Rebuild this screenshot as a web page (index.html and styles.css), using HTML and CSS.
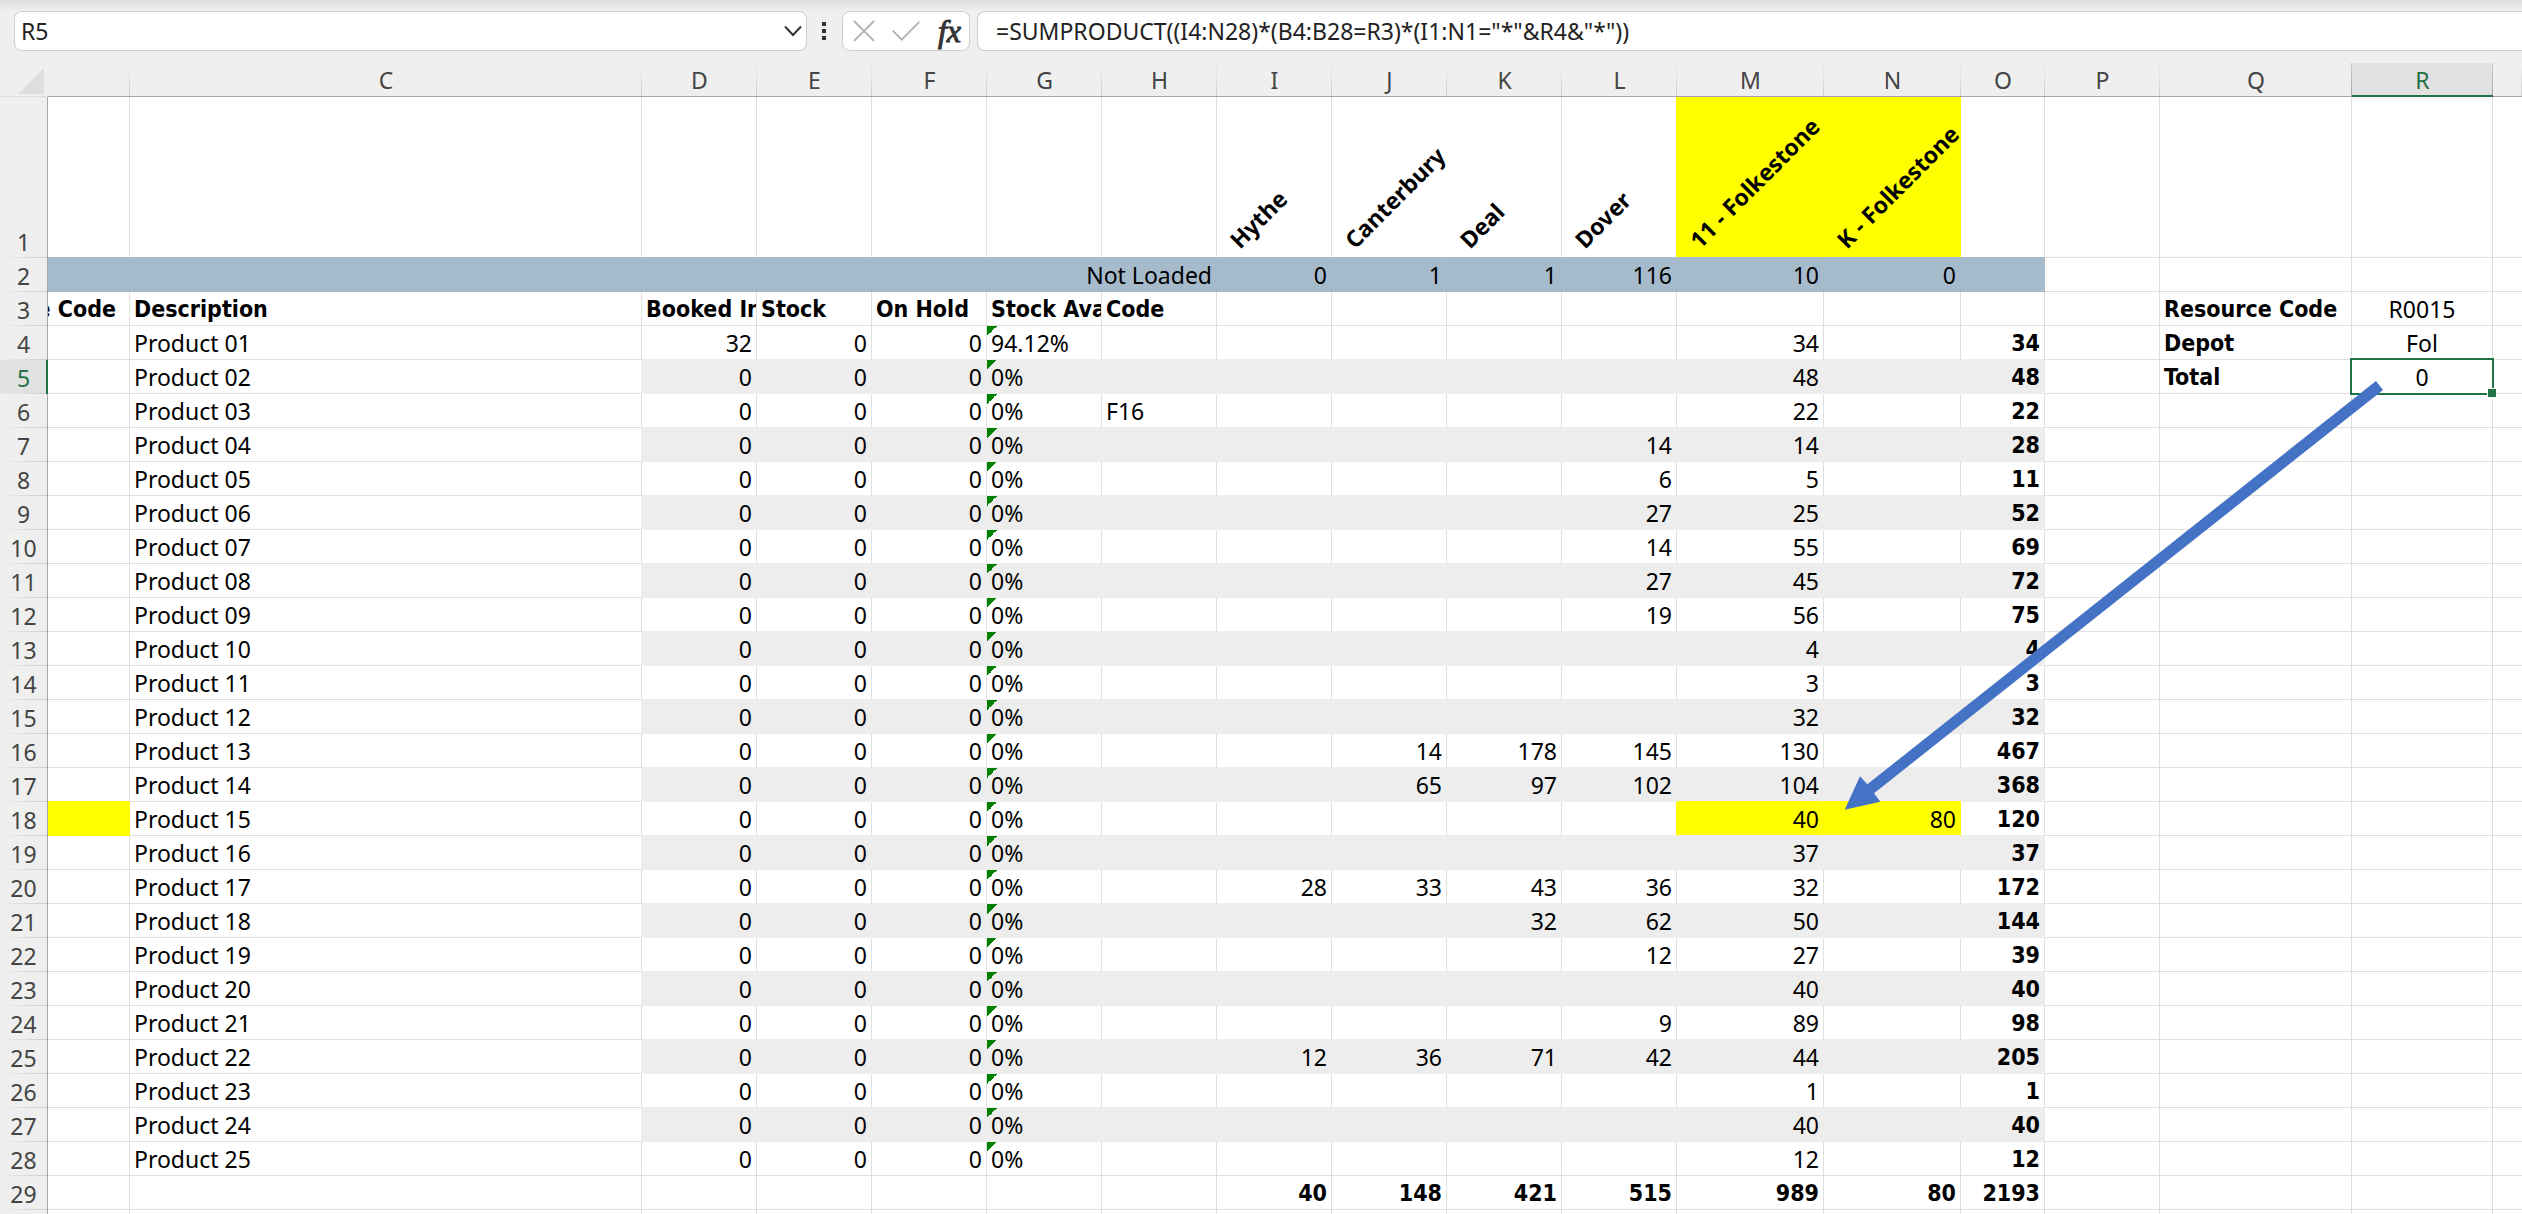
FILE: index.html
```html
<!DOCTYPE html>
<html lang="en">
<head>
<meta charset="utf-8">
<title>Stock by depot</title>
<link rel="stylesheet" href="styles.css">
</head>
<body>
<div class="app">
<header class="formula-bar">
  <div class="box name-box">
    <input class="field" type="text" value="R5" aria-label="Name box">
    <button class="icon-button" type="button" aria-label="Show names"><svg width="18" height="12" viewBox="0 0 18 12"><path d="M1 1.500l8 8.500 8-8.500" fill="none" stroke="#333" stroke-width="2"/></svg></button>
  </div>
  <svg class="grip" width="4" height="18" viewBox="0 0 4 18" fill="#333"><path d="M0 0h4v4H0zM0 7h4v4H0zM0 14h4v4H0z"/></svg>
  <div class="box tools">
    <button class="icon-button" type="button" aria-label="Cancel"><svg width="22" height="22" viewBox="0 0 22 22"><path d="M1 1l20 20M21 1L1 21" fill="none" stroke="#b3b3b3" stroke-width="1.800"/></svg></button>
    <button class="icon-button" type="button" aria-label="Enter"><svg width="28" height="20" viewBox="0 0 28 20"><path d="M.7 9.700l9 9L27.300.8" fill="none" stroke="#b3b3b3" stroke-width="1.800"/></svg></button>
    <button class="icon-button fx" type="button" aria-label="Insert function">fx</button>
  </div>
  <div class="box formula">
    <input class="field" type="text" value="=SUMPRODUCT((I4:N28)*(B4:B28=R3)*(I1:N1=&quot;*&quot;&amp;R4&amp;&quot;*&quot;))" aria-label="Formula">
  </div>
</header>
<main class="sheet">
<table class="grid">
<colgroup><col class="c-head"><col class="c-b"><col class="c-c"><col class="c-std" span="9"><col class="c-m"><col class="c-n"><col class="c-o"><col class="c-std"><col class="c-q"><col class="c-r"><col></colgroup>
<thead>
<tr><th class="corner"><svg width="26" height="26" viewBox="0 0 26 26"><path d="M26 0v26H0z" fill="#dedede"/></svg></th><th></th><th scope="col">C</th><th scope="col">D</th><th scope="col">E</th><th scope="col">F</th><th scope="col">G</th><th scope="col">H</th><th scope="col">I</th><th scope="col">J</th><th scope="col">K</th><th scope="col">L</th><th scope="col">M</th><th scope="col">N</th><th scope="col">O</th><th scope="col">P</th><th scope="col" class="before-active">Q</th><th scope="col" class="active">R</th><th></th></tr>
</thead>
<tbody>
<tr class="towns"><th scope="row">1</th><td></td><td></td><td></td><td></td><td></td><td></td><td></td><td><span class="town">Hythe</span></td><td class="open"><span class="town">Canterbury</span></td><td><span class="town">Deal</span></td><td class="before-mark"><span class="town">Dover</span></td><td class="mark"><span class="town">11 - Folkestone</span></td><td class="mark"><span class="town">K - Folkestone</span></td><td></td><td></td><td></td><td></td><td></td></tr>
<tr class="not-loaded"><th scope="row">2</th><td></td><td></td><td></td><td></td><td></td><td></td><td class="spill"><span class="from-end">Not Loaded</span></td><td>0</td><td>1</td><td>1</td><td>116</td><td>10</td><td>0</td><td></td><td></td><td></td><td></td><td></td></tr>
<tr class="labels"><th scope="row">3</th><td class="scrolled"><span class="from-end">Resource Code</span></td><td>Description</td><td>Booked In</td><td>Stock</td><td>On Hold</td><td>Stock Available</td><td>Code</td><td></td><td></td><td></td><td></td><td></td><td></td><td></td><td></td><td>Resource Code</td><td>R0015</td><td></td></tr>
<tr class="item"><th scope="row">4</th><td></td><td>Product 01</td><td>32</td><td>0</td><td>0</td><td>94.12%</td><td></td><td></td><td></td><td></td><td></td><td>34</td><td></td><td>34</td><td></td><td>Depot</td><td>Fol</td><td></td></tr>
<tr class="item band"><th scope="row" class="active">5</th><td></td><td>Product 02</td><td>0</td><td>0</td><td>0</td><td>0%</td><td></td><td></td><td></td><td></td><td></td><td>48</td><td></td><td>48</td><td></td><td>Total</td><td class="selected">0</td><td></td></tr>
<tr class="item"><th scope="row">6</th><td></td><td>Product 03</td><td>0</td><td>0</td><td>0</td><td>0%</td><td>F16</td><td></td><td></td><td></td><td></td><td>22</td><td></td><td>22</td><td></td><td></td><td></td><td></td></tr>
<tr class="item band"><th scope="row">7</th><td></td><td>Product 04</td><td>0</td><td>0</td><td>0</td><td>0%</td><td></td><td></td><td></td><td></td><td>14</td><td>14</td><td></td><td>28</td><td></td><td></td><td></td><td></td></tr>
<tr class="item"><th scope="row">8</th><td></td><td>Product 05</td><td>0</td><td>0</td><td>0</td><td>0%</td><td></td><td></td><td></td><td></td><td>6</td><td>5</td><td></td><td>11</td><td></td><td></td><td></td><td></td></tr>
<tr class="item band"><th scope="row">9</th><td></td><td>Product 06</td><td>0</td><td>0</td><td>0</td><td>0%</td><td></td><td></td><td></td><td></td><td>27</td><td>25</td><td></td><td>52</td><td></td><td></td><td></td><td></td></tr>
<tr class="item"><th scope="row">10</th><td></td><td>Product 07</td><td>0</td><td>0</td><td>0</td><td>0%</td><td></td><td></td><td></td><td></td><td>14</td><td>55</td><td></td><td>69</td><td></td><td></td><td></td><td></td></tr>
<tr class="item band"><th scope="row">11</th><td></td><td>Product 08</td><td>0</td><td>0</td><td>0</td><td>0%</td><td></td><td></td><td></td><td></td><td>27</td><td>45</td><td></td><td>72</td><td></td><td></td><td></td><td></td></tr>
<tr class="item"><th scope="row">12</th><td></td><td>Product 09</td><td>0</td><td>0</td><td>0</td><td>0%</td><td></td><td></td><td></td><td></td><td>19</td><td>56</td><td></td><td>75</td><td></td><td></td><td></td><td></td></tr>
<tr class="item band"><th scope="row">13</th><td></td><td>Product 10</td><td>0</td><td>0</td><td>0</td><td>0%</td><td></td><td></td><td></td><td></td><td></td><td>4</td><td></td><td>4</td><td></td><td></td><td></td><td></td></tr>
<tr class="item"><th scope="row">14</th><td></td><td>Product 11</td><td>0</td><td>0</td><td>0</td><td>0%</td><td></td><td></td><td></td><td></td><td></td><td>3</td><td></td><td>3</td><td></td><td></td><td></td><td></td></tr>
<tr class="item band"><th scope="row">15</th><td></td><td>Product 12</td><td>0</td><td>0</td><td>0</td><td>0%</td><td></td><td></td><td></td><td></td><td></td><td>32</td><td></td><td>32</td><td></td><td></td><td></td><td></td></tr>
<tr class="item"><th scope="row">16</th><td></td><td>Product 13</td><td>0</td><td>0</td><td>0</td><td>0%</td><td></td><td></td><td>14</td><td>178</td><td>145</td><td>130</td><td></td><td>467</td><td></td><td></td><td></td><td></td></tr>
<tr class="item band"><th scope="row">17</th><td class="above-mark"></td><td>Product 14</td><td>0</td><td>0</td><td>0</td><td>0%</td><td></td><td></td><td>65</td><td>97</td><td>102</td><td class="above-mark">104</td><td class="above-mark"></td><td>368</td><td></td><td></td><td></td><td></td></tr>
<tr class="item"><th scope="row">18</th><td class="mark above-mark"></td><td>Product 15</td><td>0</td><td>0</td><td>0</td><td>0%</td><td></td><td></td><td></td><td></td><td class="before-mark"></td><td class="mark">40</td><td class="mark">80</td><td>120</td><td></td><td></td><td></td><td></td></tr>
<tr class="item band"><th scope="row">19</th><td></td><td>Product 16</td><td>0</td><td>0</td><td>0</td><td>0%</td><td></td><td></td><td></td><td></td><td></td><td>37</td><td></td><td>37</td><td></td><td></td><td></td><td></td></tr>
<tr class="item"><th scope="row">20</th><td></td><td>Product 17</td><td>0</td><td>0</td><td>0</td><td>0%</td><td></td><td>28</td><td>33</td><td>43</td><td>36</td><td>32</td><td></td><td>172</td><td></td><td></td><td></td><td></td></tr>
<tr class="item band"><th scope="row">21</th><td></td><td>Product 18</td><td>0</td><td>0</td><td>0</td><td>0%</td><td></td><td></td><td></td><td>32</td><td>62</td><td>50</td><td></td><td>144</td><td></td><td></td><td></td><td></td></tr>
<tr class="item"><th scope="row">22</th><td></td><td>Product 19</td><td>0</td><td>0</td><td>0</td><td>0%</td><td></td><td></td><td></td><td></td><td>12</td><td>27</td><td></td><td>39</td><td></td><td></td><td></td><td></td></tr>
<tr class="item band"><th scope="row">23</th><td></td><td>Product 20</td><td>0</td><td>0</td><td>0</td><td>0%</td><td></td><td></td><td></td><td></td><td></td><td>40</td><td></td><td>40</td><td></td><td></td><td></td><td></td></tr>
<tr class="item"><th scope="row">24</th><td></td><td>Product 21</td><td>0</td><td>0</td><td>0</td><td>0%</td><td></td><td></td><td></td><td></td><td>9</td><td>89</td><td></td><td>98</td><td></td><td></td><td></td><td></td></tr>
<tr class="item band"><th scope="row">25</th><td></td><td>Product 22</td><td>0</td><td>0</td><td>0</td><td>0%</td><td></td><td>12</td><td>36</td><td>71</td><td>42</td><td>44</td><td></td><td>205</td><td></td><td></td><td></td><td></td></tr>
<tr class="item"><th scope="row">26</th><td></td><td>Product 23</td><td>0</td><td>0</td><td>0</td><td>0%</td><td></td><td></td><td></td><td></td><td></td><td>1</td><td></td><td>1</td><td></td><td></td><td></td><td></td></tr>
<tr class="item band"><th scope="row">27</th><td></td><td>Product 24</td><td>0</td><td>0</td><td>0</td><td>0%</td><td></td><td></td><td></td><td></td><td></td><td>40</td><td></td><td>40</td><td></td><td></td><td></td><td></td></tr>
<tr class="item last"><th scope="row">28</th><td></td><td>Product 25</td><td>0</td><td>0</td><td>0</td><td>0%</td><td></td><td></td><td></td><td></td><td></td><td>12</td><td></td><td>12</td><td></td><td></td><td></td><td></td></tr>
<tr class="totals"><th scope="row">29</th><td></td><td></td><td></td><td></td><td></td><td></td><td></td><td>40</td><td>148</td><td>421</td><td>515</td><td>989</td><td>80</td><td>2193</td><td></td><td></td><td></td><td></td></tr>
<tr><th></th><td></td><td></td><td></td><td></td><td></td><td></td><td></td><td></td><td></td><td></td><td></td><td></td><td></td><td></td><td></td><td></td><td></td><td></td></tr>
</tbody>
</table>
<svg class="arrow" width="544" height="430" viewBox="0 0 544 430" aria-hidden="true"><path d="M4.700 426.700L20 393.300l7.300 8L536-2l7 9L34 410.300l6.300 8.400z" fill="#4472c4"/></svg>
</main>
</div>
</body>
</html>
```
FILE: styles.css
```css
:root {
  --chrome: #efefef;
  --line: #dfdfdf;
  --edge: #a6a6a6;
  --band: #ededed;
  --mark: #ffff00;
  --blue: #a5bbcc;
  --green: #217346;
}

* { box-sizing: border-box; }

body {
  margin: 0;
  background: #fff;
  color: #000;
  font: 23px/31px "Noto Sans", "Open Sans", sans-serif;
}

.app { height: 100vh; overflow: hidden; }

/* Formula bar */
.formula-bar {
  display: flex;
  align-items: center;
  height: 63px;
  padding: 0 0 1px 14px;
  background: linear-gradient(#dedede, var(--chrome) 11px);
}

.box {
  display: flex;
  align-items: center;
  height: 40px;
  border: 1px solid #cfcfcf;
  border-radius: 8px;
  background: #fff;
}

.name-box { flex: 0 1 793px; padding: 0 4px 0 5px; }
.grip { flex: none; margin: 0 16px 0 15px; }
.tools { flex: none; width: 128px; padding: 0 8px 0 10px; justify-content: space-between; }
.formula { flex: 1; margin-left: 7px; padding-left: 17px; border-right: 0; border-radius: 8px 0 0 8px; }

.field {
  flex: 1;
  min-width: 0;
  height: 38px;
  padding: 0 1px;
  border: 0;
  outline: 0;
  background: none;
  color: #222;
  font: inherit;
}

.icon-button {
  display: flex;
  align-items: center;
  padding: 0;
  border: 0;
  background: none;
  color: #333;
}

.fx {
  font: italic 32px/32px "Liberation Serif", serif;
  -webkit-text-stroke: 1px #333;
}

/* Grid */
.sheet { position: relative; }

.grid {
  width: 100%;
  table-layout: fixed;
  border-collapse: separate;
  border-spacing: 0;
}

.c-head { width: 48px; }
.c-b { width: 82px; }
.c-c { width: 512px; }
.c-std { width: 115px; }
.c-m { width: 147px; }
.c-n { width: 137px; }
.c-o { width: 84px; }
.c-q { width: 192px; }
.c-r { width: 141px; }

th, td {
  height: 34px;
  padding: 2px 4px 0;
  white-space: nowrap;
}

th {
  padding: 2px 0 0;
  background-color: var(--chrome);
  color: #444;
  font-weight: 400;
}

thead th {
  border-bottom: 1px solid var(--edge);
  background-image: linear-gradient(var(--chrome), #cccccc);
  background-position: right;
  background-size: 1px 100%;
  background-repeat: no-repeat;
}

thead .corner { background-image: none; border-color: #dedede; }
.corner svg { display: block; margin-left: 18px; }

tbody th {
  border-right: 1px solid var(--edge);
  background-image: linear-gradient(90deg, var(--chrome), #cccccc);
  background-position: bottom;
  background-size: 100% 1px;
  background-repeat: no-repeat;
}

th.active { background-color: #e1e1e1; color: var(--green); }
thead th.active { border-bottom-color: var(--green); box-shadow: inset 0 -1px var(--green); }
tbody th.active { border-right-color: var(--green); box-shadow: inset -1px 0 var(--green); }
thead th.active, thead th.before-active { background-image: linear-gradient(#cccccc, var(--edge)); }

td {
  overflow: hidden;
  border-right: 1px solid var(--line);
  border-bottom: 1px solid var(--line);
}

td:nth-child(n+4) { text-align: right; }
td:nth-child(n+7):nth-child(-n+8), td:nth-child(17), .labels td { text-align: left; }
td:nth-child(18), .labels td:nth-child(18) { padding: 2px 0 0; text-align: center; }
td:last-child { border-right: 0; }

.labels td:nth-child(-n+17),
.item td:nth-child(15),
.item td:nth-child(17),
.totals td {
  font-family: "DejaVu Sans Condensed", "DejaVu Sans", sans-serif;
  font-weight: 700;
}

.from-end { display: flex; justify-content: flex-end; }
.grid .spill { overflow: visible; }
.grid .scrolled { padding-right: 13px; }

/* Row 1: slanted depot names */
.towns th, .towns td { height: 161px; vertical-align: bottom; }
.towns td { position: relative; overflow: visible; }
.towns .open { border-right-color: transparent; }

.town {
  position: absolute;
  left: 25px;
  bottom: 5px;
  z-index: 1;
  font: bold 23px/24px "Noto Sans", sans-serif;
  transform: rotate(-45deg);
  transform-origin: 0 100%;
}

.towns td:nth-child(-n+15) { border-bottom-color: var(--blue); }

.not-loaded td:nth-child(-n+15) { background: var(--blue); border-color: var(--blue); }

/* Product rows */
.item td:nth-child(n+4):nth-child(-n+15) { border-bottom-color: var(--band); }
.item.last td:nth-child(n+4):nth-child(-n+15) { border-bottom-color: var(--line); }
.band td:nth-child(3) { border-right-color: var(--band); }
.band td:nth-child(n+4):nth-child(-n+15) { background-color: var(--band); border-right-color: var(--band); }

.item td:nth-child(7) {
  background-image: linear-gradient(135deg, #008000 50%, transparent 50%);
  background-size: 10px 10px;
  background-repeat: no-repeat;
}

.grid td.mark { background: var(--mark); border-right-color: var(--mark); }
.grid td.before-mark { border-right-color: var(--mark); }
.grid .item td.above-mark.above-mark.above-mark { border-bottom-color: var(--mark); }

/* Active cell */
td.selected { position: relative; overflow: visible; }

.selected::before {
  content: "";
  position: absolute;
  inset: -2px;
  border: 2px solid var(--green);
}

.selected::after {
  content: "";
  position: absolute;
  right: -4px;
  bottom: -4px;
  width: 8px;
  height: 8px;
  border: 1px solid #fff;
  border-width: 1px 0 0 1px;
  background: var(--green);
}

.arrow {
  position: absolute;
  left: 1840px;
  top: 320px;
  overflow: visible;
  pointer-events: none;
}
```
